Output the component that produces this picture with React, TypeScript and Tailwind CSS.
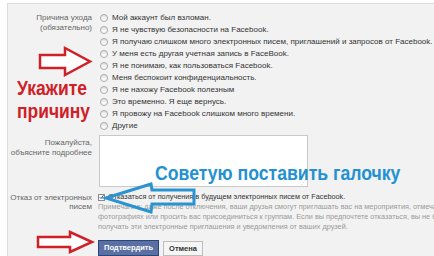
import React from 'react';

const reasons = [
  'Мой аккаунт был взломан.',
  'Я не чувствую безопасности на Facebook.',
  'Я получаю слишком много электронных писем, приглашений и запросов от Facebook.',
  'У меня есть другая учетная запись в FaceBook.',
  'Я не понимаю, как пользоваться Facebook.',
  'Меня беспокоит конфиденциальность.',
  'Я не нахожу Facebook полезным',
  'Это временно. Я еще вернусь.',
  'Я провожу на Facebook слишком много времени.',
  'Другие',
];

const Radio = () => (
  <span className="w-[8px] h-[8px] rounded-full border border-[#a9a9a9] bg-gradient-to-b from-[#e3e3e3] to-[#ffffff] shrink-0" />
);

const App: React.FC = () => {
  return (
    <div className="relative w-[434px] h-[256px] overflow-hidden bg-white font-['Liberation_Sans',Arial,sans-serif]">
      <div className="ml-[7px] mt-[3px] h-[260px] border-t border-l border-[#dcdcdc] bg-[#f2f2f2] pt-[8px] text-[8px] leading-[10px]">
        {/* reason */}
        <div className="flex">
          <div className="w-[84px] shrink-0 text-right text-[#666] pt-[1px] whitespace-nowrap">
            <div>Причина ухода</div>
            <div>(обязательно)</div>
          </div>
          <div className="ml-[8px] flex flex-col">
            {reasons.map((r) => (
              <label key={r} className="flex items-center gap-[4px] h-[12px] text-[#333] whitespace-nowrap">
                <Radio />
                <span>{r}</span>
              </label>
            ))}
          </div>
        </div>

        {/* details */}
        <div className="flex mt-[3px]">
          <div className="w-[84px] shrink-0 text-right text-[#666] pt-[3px] whitespace-nowrap">
            <div>Пожалуйста,</div>
            <div>объясните подробнее</div>
          </div>
          <div className="ml-[7px] relative w-[209px] h-[52px] shrink-0 bg-white border border-[#c9c9c9]">
            <span className="absolute right-[1px] bottom-[1px] text-[5px] leading-[5px] text-[#bbb]">⋰</span>
          </div>
        </div>

        {/* email opt-out */}
        <div className="flex mt-[5px]">
          <div className="w-[84px] shrink-0 text-right text-[#666] pt-[1px] leading-[9px] whitespace-nowrap">
            <div>Отказ от электронных</div>
            <div>писем</div>
          </div>
          <div className="ml-[6px] flex flex-col whitespace-nowrap text-[7.3px]">
            <div className="flex items-center gap-[3px] h-[10px] text-[#333]">
              <span className="w-[7px] h-[7px] shrink-0 border border-[#8a8a8a] bg-white flex items-center justify-center">
                <svg width="6" height="6" viewBox="0 0 6 6">
                  <path d="M0.8 3.2 L2.4 4.8 L5.4 0.9" fill="none" stroke="#2b4b8c" strokeWidth="1.2" />
                </svg>
              </span>
              <span>Отказаться от получения в будущем электронных писем от Facebook.</span>
            </div>
            <div className="text-[#9a9a9a]">
              <div>Примечание: даже после отключения, ваши друзья смогут приглашать вас на мероприятия, отмечать вас на</div>
              <div>фотографиях или просить вас присоединиться к группам. Если вы предпочтете отказаться, вы не будете</div>
              <div>получать эти электронные приглашения и уведомления от ваших друзей.</div>
            </div>
            <div className="flex items-center gap-[4px] mt-[8px]">
              <button className="h-[16px] px-[5px] bg-[#5a70a3] border border-[#29447e] text-white font-bold text-[7.5px] leading-[14px]">
                Подтвердить
              </button>
              <button className="h-[15px] px-[5px] bg-[#f5f5f5] border border-[#bdbdbd] text-[#333] font-bold text-[7.5px] leading-[13px]">
                Отмена
              </button>
            </div>
          </div>
        </div>
      </div>

      {/* annotations */}
      <svg className="absolute left-0 top-0" width="434" height="256" viewBox="0 0 434 256">
        <path d="M40 55 L65 55 L65 48 L90 61.5 L65 75 L65 68 L40 68 Z" fill="#fff" stroke="#cf2027" strokeWidth="2.5" />
        <path d="M38 237 L70 237 L70 232 L92 242 L70 252 L70 247 L38 247 Z" fill="#fff" stroke="#cf2027" strokeWidth="2.5" />
        <path d="M106 198 L151 184 L152 190 L194 190 L194 204 L152 204 L151 212 Z" fill="none" stroke="#2a93d2" strokeWidth="3" />
      </svg>
      <div className="absolute left-[17px] top-[76px] origin-left scale-x-[0.83] text-[#cf2027] font-bold text-[21px] leading-[23px]">
        <div>Укажите</div>
        <div>причину</div>
      </div>
      <div className="absolute left-[155px] top-[160px] origin-left scale-x-[0.84] text-[#2391d0] font-bold text-[21px] leading-[26px] whitespace-nowrap">
        Советую поставить галочку
      </div>
    </div>
  );
};

export default App;
